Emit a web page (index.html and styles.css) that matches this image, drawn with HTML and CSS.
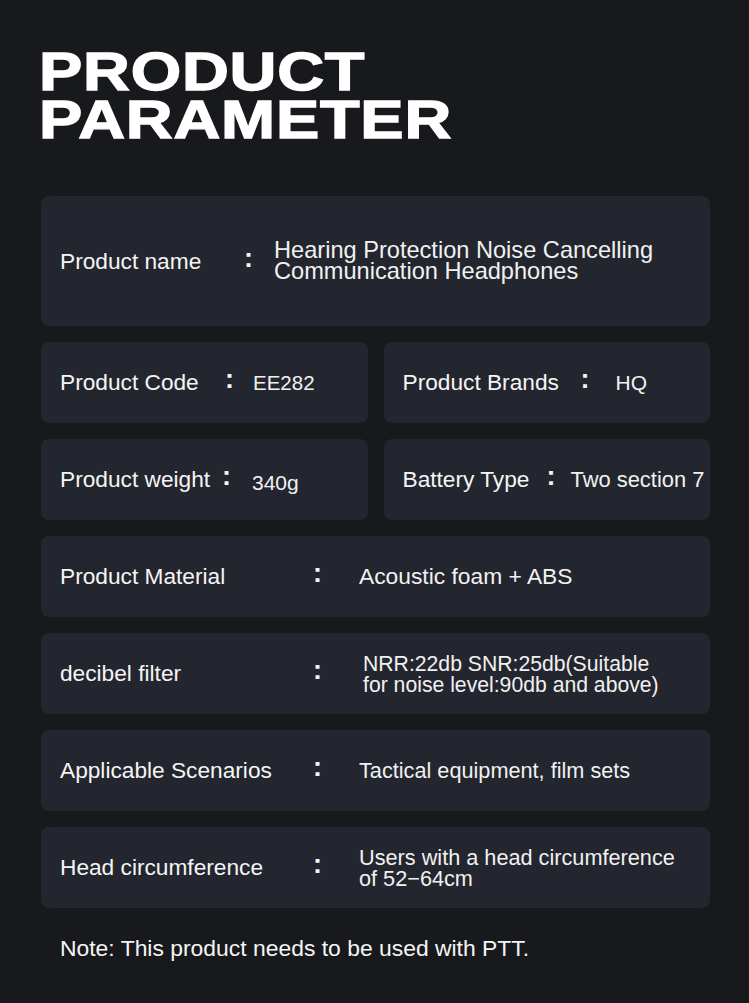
FILE: index.html
```html
<!DOCTYPE html>
<html lang="en">
<head>
<meta charset="utf-8">
<title>Product Parameter</title>
<link rel="stylesheet" href="styles.css">
</head>
<body>
<main class="page">
  <h1 class="title"><span class="title-line">PRODUCT</span><span class="title-line">PARAMETER</span></h1>

  <section class="specs">
    <div class="card card--tall card--name">
      <span class="label">Product name</span>
      <span class="colon">:</span>
      <span class="value">Hearing Protection Noise Cancelling<br>Communication Headphones</span>
    </div>

    <div class="pair">
      <div class="card card--half card--code">
        <span class="label">Product Code</span>
        <span class="colon">:</span>
        <span class="value">EE282</span>
      </div>
      <div class="card card--half card--brands">
        <span class="label">Product Brands</span>
        <span class="colon">:</span>
        <span class="value">HQ</span>
      </div>
    </div>

    <div class="pair">
      <div class="card card--half card--weight">
        <span class="label">Product weight</span>
        <span class="colon">:</span>
        <span class="value value--low">340g</span>
      </div>
      <div class="card card--half card--battery">
        <span class="label">Battery Type</span>
        <span class="colon">:</span>
        <span class="value">Two section 7</span>
      </div>
    </div>

    <div class="card card--wide card--material">
      <span class="label">Product Material</span>
      <span class="colon">:</span>
      <span class="value">Acoustic foam + ABS</span>
    </div>

    <div class="card card--wide card--filter">
      <span class="label">decibel filter</span>
      <span class="colon">:</span>
      <span class="value">NRR:22db SNR:25db(Suitable<br>for noise level:90db and above)</span>
    </div>

    <div class="card card--wide">
      <span class="label">Applicable Scenarios</span>
      <span class="colon">:</span>
      <span class="value">Tactical equipment, film sets</span>
    </div>

    <div class="card card--wide">
      <span class="label">Head circumference</span>
      <span class="colon">:</span>
      <span class="value">Users with a head circumference<br>of 52−64cm</span>
    </div>
  </section>

  <p class="note">Note: This product needs to be used with PTT.</p>
</main>
</body>
</html>
```

FILE: styles.css
```css
* { box-sizing: border-box; }

html, body {
  margin: 0;
  padding: 0;
  background: #18191c;
}

body {
  width: 749px;
  height: 1003px;
  overflow: hidden;
  font-family: "Liberation Sans", Arial, sans-serif;
  color: #f3f3f3;
}

.page {
  padding: 48px 39px 0 41px;
}

.title {
  margin: 0 0 0 -2px;
  font-family: "Liberation Sans", Arial, sans-serif;
  font-weight: 700;
  font-size: 53px;
  line-height: 48px;
  color: #ffffff;
  letter-spacing: 0.6px;
}

.title-line {
  display: block;
  width: max-content;
  transform: scaleX(1.225);
  transform-origin: left center;
  -webkit-text-stroke: 1.3px #ffffff;
}

.specs {
  margin-top: 52px;
  display: flex;
  flex-direction: column;
  gap: 16px;
}

.pair {
  display: grid;
  grid-template-columns: 1fr 1fr;
  gap: 16px;
}

.card {
  height: 81px;
  background: #23262e;
  border-radius: 8px;
  display: grid;
  align-items: center;
  padding-left: 19px;
  font-size: 22.7px;
  line-height: 21px;
  white-space: nowrap;
  overflow: hidden;
}

.card--tall { height: 130px; }

.card--name    { grid-template-columns: 184px 30px 1fr; }
.card--code    { grid-template-columns: 165px 28px 1fr; }
.card--brands  { grid-template-columns: 178px 35px 1fr; }
.card--weight  { grid-template-columns: 162px 30px 1fr; }
.card--battery { grid-template-columns: 144px 24px 1fr; }
.card--wide    { grid-template-columns: 253px 46px 1fr; }
.card--filter  { grid-template-columns: 253px 50px 1fr; }

.label { color: #f5f5f5; }

.colon {
  font-size: 27px;
  font-weight: 700;
  line-height: 21px;
  color: #f5f5f5;
  position: relative;
  top: -3px;
}

.value { color: #f1f1f1; font-size: 21.7px; }

.card--name .value { font-size: 23.6px; }
.card--half .value { font-size: 21px; }
.card--code .value { font-size: 20.5px; }
.card--battery .value { font-size: 21.9px; }
.card--material .value { font-size: 22.8px; }
.card--filter .value { font-size: 21.2px; }

.value--low { padding-top: 5px; }

.note {
  margin: 27px 0 0 19px;
  font-size: 22.9px;
  line-height: 26px;
  color: #f5f5f5;
}
```
